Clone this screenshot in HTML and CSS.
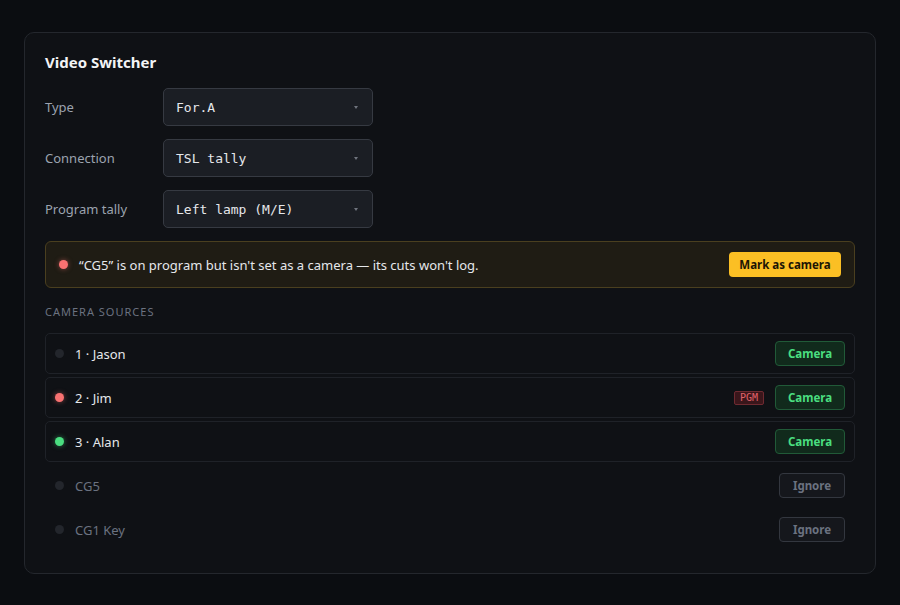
FILE: index.html
```html
<!DOCTYPE html>
<html lang="en">

<head>
    <meta charset="UTF-8">
    <meta name="viewport" content="width=device-width, initial-scale=1.0">
    <title>Video Switcher</title>
    <link rel="stylesheet" href="styles.css">
</head>

<body>
    <section class="panel">
        <h2 class="panel-title">Video Switcher</h2>

        <!-- switcher settings -->
        <div class="field">
            <label class="field-label">Type</label>
            <div class="select"><span>For.A</span><span class="caret"></span></div>
        </div>
        <div class="field">
            <label class="field-label">Connection</label>
            <div class="select"><span>TSL tally</span><span class="caret"></span></div>
        </div>
        <div class="field">
            <label class="field-label">Program tally</label>
            <div class="select"><span>Left lamp (M/E)</span><span class="caret"></span></div>
        </div>

        <!-- warning when an unmapped source is on air -->
        <div class="alert">
            <span class="dot dot-red"></span>
            <span class="alert-text">“CG5” is on program but isn't set as a camera — its cuts won't log.</span>
            <button class="btn btn-warn">Mark as camera</button>
        </div>

        <h3 class="section-title">CAMERA SOURCES</h3>

        <ul class="sources">
            <li class="source is-camera">
                <span class="dot"></span>
                <span class="source-name">1 · Jason</span>
                <button class="btn btn-camera">Camera</button>
            </li>
            <li class="source is-camera">
                <span class="dot dot-red"></span>
                <span class="source-name">2 · Jim</span>
                <span class="badge-pgm">PGM</span>
                <button class="btn btn-camera">Camera</button>
            </li>
            <li class="source is-camera">
                <span class="dot dot-green"></span>
                <span class="source-name">3 · Alan</span>
                <button class="btn btn-camera">Camera</button>
            </li>
            <li class="source is-ignored">
                <span class="dot"></span>
                <span class="source-name">CG5</span>
                <button class="btn btn-ignore">Ignore</button>
            </li>
            <li class="source is-ignored">
                <span class="dot"></span>
                <span class="source-name">CG1 Key</span>
                <button class="btn btn-ignore">Ignore</button>
            </li>
        </ul>
    </section>
</body>

</html>
```

FILE: styles.css
```css
* {
    margin: 0;
    padding: 0;
    box-sizing: border-box;
}

body {
    font-family: "Noto Sans", "Open Sans", sans-serif;
    background: #0b0d11;
    color: #e5e7eb;
    padding: 32px 24px;
}

.panel {
    background: #0f1115;
    border: 1px solid #24272d;
    border-radius: 10px;
    padding: 19px 20px 23px;
}

.panel-title {
    font-size: 15px;
    font-weight: 700;
    color: #f3f4f6;
    line-height: 20px;
    margin-bottom: 16px;
}

/* settings rows */
.field {
    display: flex;
    align-items: center;
    margin-bottom: 13px;
}

.field-label {
    width: 118px;
    font-size: 13px;
    color: #9ca3af;
}

.select {
    width: 210px;
    height: 38px;
    display: flex;
    align-items: center;
    justify-content: space-between;
    padding: 0 14px 0 12px;
    background: #1b1e24;
    border: 1px solid #363a42;
    border-radius: 5px;
    font-family: "DejaVu Sans Mono", "Liberation Mono", monospace;
    font-size: 13px;
    color: #e5e7eb;
}

.caret {
    width: 0;
    height: 0;
    border-left: 2.5px solid transparent;
    border-right: 2.5px solid transparent;
    border-top: 3px solid #6f747d;
}

/* program warning */
.alert {
    display: flex;
    align-items: center;
    height: 47px;
    padding: 0 13px 0 13px;
    background: #1f1c14;
    border: 1px solid #4a3f1f;
    border-radius: 6px;
    margin-bottom: 17px;
}

.alert-text {
    flex: 1;
    font-size: 13px;
    color: #e5e7eb;
    margin-left: 11px;
}

.dot {
    width: 9px;
    height: 9px;
    border-radius: 50%;
    background: #23262c;
    flex-shrink: 0;
}

.dot-red {
    background: #f87171;
    box-shadow: 0 0 5px rgba(248, 113, 113, 0.5);
}

.dot-green {
    background: #4ade80;
    box-shadow: 0 0 5px rgba(74, 222, 128, 0.5);
}

.btn {
    font-family: inherit;
    font-size: 11.5px;
    font-weight: 700;
    height: 25px;
    border-radius: 4px;
    cursor: pointer;
}

.btn-warn {
    width: 112px;
    background: #fbbf24;
    color: #1c1505;
    border: none;
}

.section-title {
    font-size: 11px;
    font-weight: 400;
    letter-spacing: 1px;
    color: #6b7280;
    line-height: 14px;
    margin-bottom: 14px;
}

/* source list */
.sources {
    list-style: none;
    display: flex;
    flex-direction: column;
    gap: 3px;
}

.source {
    display: flex;
    align-items: center;
    height: 41px;
    padding: 0 9px 0 9px;
    border: 1px solid transparent;
    border-radius: 5px;
}

.source.is-camera {
    border-color: #1f2228;
}

.source-name {
    flex: 1;
    font-size: 13px;
    color: #e5e7eb;
    margin-left: 11px;
}

.is-ignored .source-name {
    color: #6b7280;
}

.badge-pgm {
    font-family: "DejaVu Sans Mono", "Liberation Mono", monospace;
    font-size: 10px;
    line-height: 12px;
    color: #e0626a;
    background: #3a161b;
    border: 1px solid #6e2a31;
    border-radius: 2px;
    padding: 0 5px;
    margin-right: 11px;
}

.btn-camera {
    width: 70px;
    background: #112a1c;
    border: 1px solid #215a38;
    color: #4ade80;
}

.btn-ignore {
    width: 66px;
    background: #15171c;
    border: 1px solid #33373f;
    color: #6b7280;
}
```
